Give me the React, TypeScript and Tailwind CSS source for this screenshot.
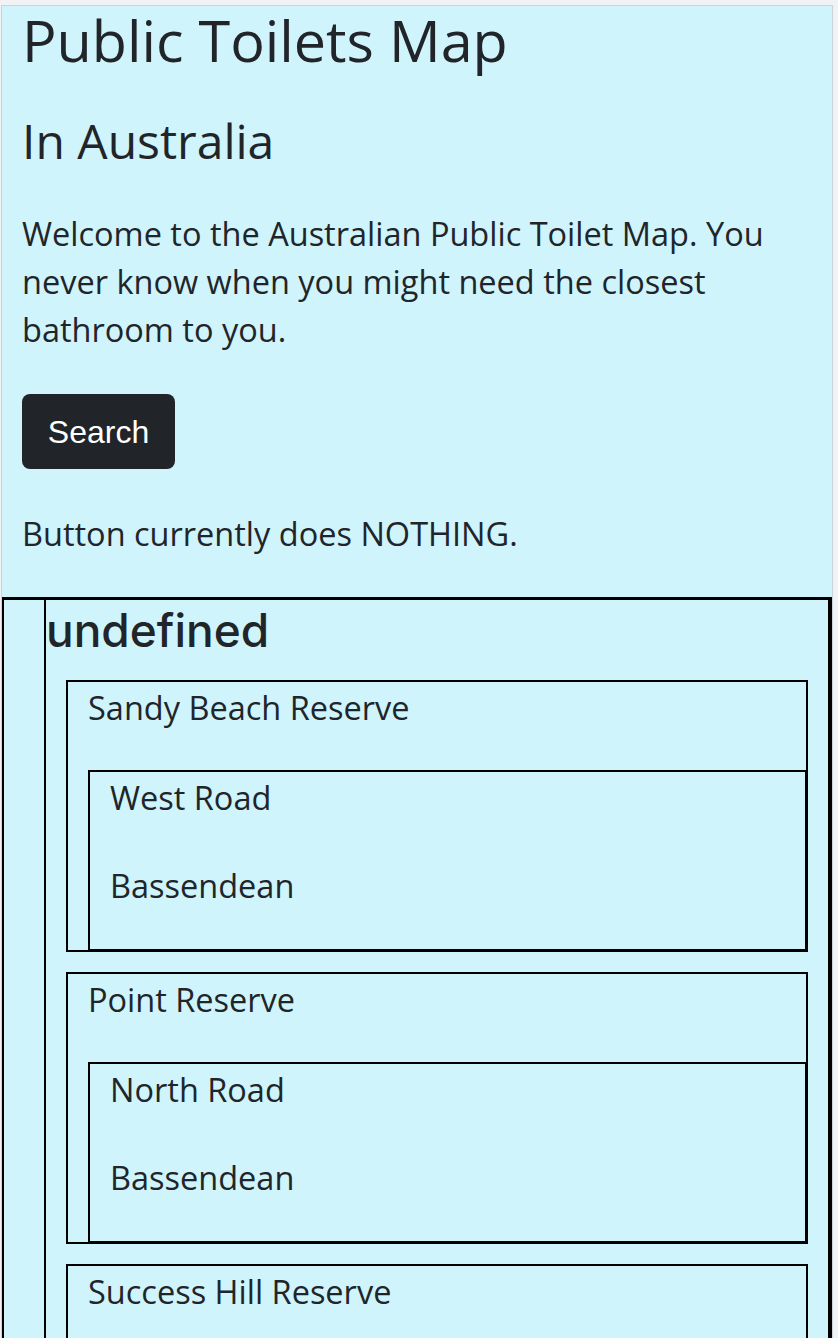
import React from 'react';

const toilets = [
  { name: 'Sandy Beach Reserve', street: 'West Road', suburb: 'Bassendean' },
  { name: 'Point Reserve', street: 'North Road', suburb: 'Bassendean' },
  { name: 'Success Hill Reserve', street: 'Reserve Street', suburb: 'Bassendean' },
];

const bodyFont = "font-['Open_Sans','Noto_Sans',sans-serif]";

function ToiletCard({ name, street, suburb }: { name: string; street: string; suburb: string }) {
  return (
    <div className="ml-[20px] mr-[20px] mb-[20px] border-2 border-black pl-[20px]">
      <p className="mb-[38px] pt-[2px] text-[32.5px] leading-[48px]">{name}</p>
      <div className="-mr-[2px] -mb-[2px] border-t-2 border-l-2 border-r-[3px] border-b-[3px] border-black pl-[20px]">
        <p className="mb-[38px] pt-[2px] text-[32.5px] leading-[48px]">{street}</p>
        <p className="mb-[39px] pt-[2px] text-[32.5px] leading-[48px]">{suburb}</p>
      </div>
    </div>
  );
}

export default function App() {
  return (
    <div className={`min-h-screen bg-[#f2f2f4] pt-[5px] text-[#212529] ${bodyFont}`}>
      <div className="ml-[1px] w-[832px] border border-b-0 border-[#c8d4d8] bg-[#cff4fc]">
        {/* Header */}
        <div className="px-[20px]">
          <h1 className="mb-[38px] text-[57.5px] leading-[68px] font-normal">Public Toilets Map</h1>
          <h2 className="mb-[40px] text-[48px] leading-[58px] font-normal">In Australia</h2>
          <p className="mb-[40px] text-[32.5px] leading-[48px]">
            Welcome to the Australian Public Toilet Map. You never know when you might need the closest bathroom to you.
          </p>
          <button
            type="button"
            className="mb-[40px] block h-[75px] w-[153px] rounded-[8px] bg-[#212529] font-['Liberation_Sans',Arial,sans-serif] text-[32px] text-white"
          >
            Search
          </button>
          <p className="pt-[1px] pb-[39px] text-[32.5px] leading-[48px]">Button currently does NOTHING.</p>
        </div>

        {/* Results */}
        <div className="border-t-[3px] border-l-2 border-r-[4px] border-black pl-[40px]">
          <div className="border-l-2 border-black">
            <h2 className="mb-[20px] font-['Inter','Liberation_Sans',sans-serif] text-[46px] leading-[60px] font-medium">
              undefined
            </h2>
            {toilets.map((t) => (
              <ToiletCard key={t.name} {...t} />
            ))}
          </div>
        </div>
      </div>
    </div>
  );
}
